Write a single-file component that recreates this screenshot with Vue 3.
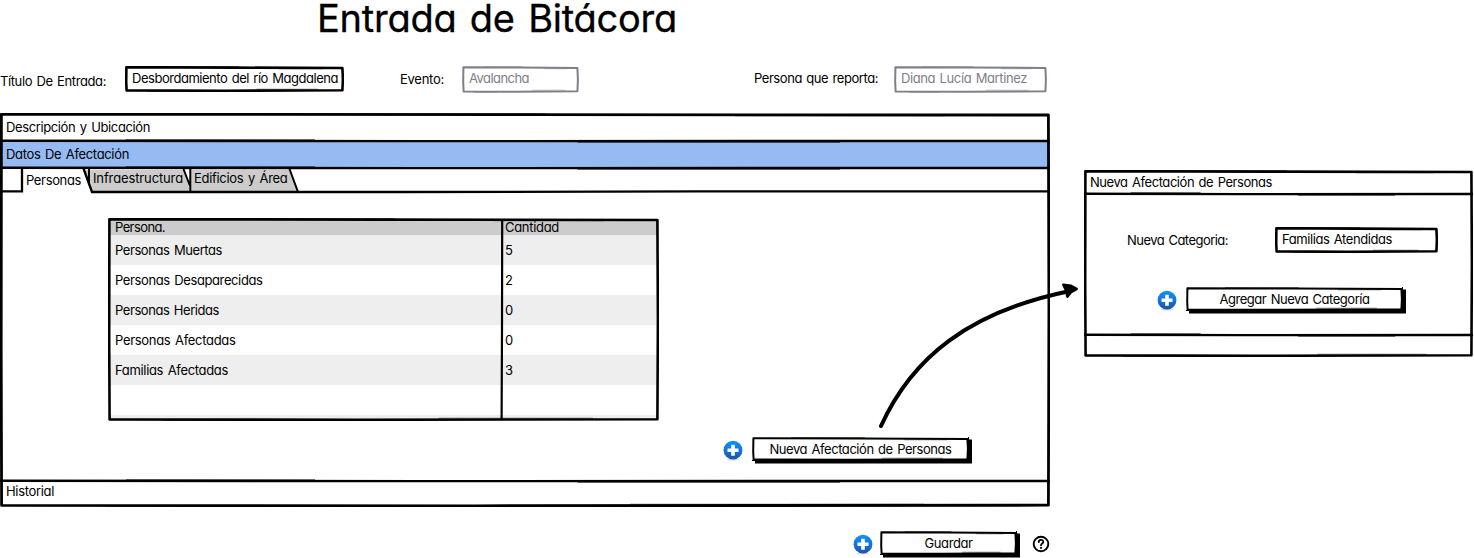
<script setup>
import { h } from 'vue'

// Spreads a label's letters so that it fills a given width.
const vFit = {
  mounted(el, { value }) {
    const n = el.textContent.length
    const w = el.getBoundingClientRect().width
    el.style.letterSpacing = (value - w) / n + 'px'
  },
}

// Hand-drawn rectangle that covers its parent.
const Sketch = ({ w, h: t, c = '#000', s = 2.4 }) =>
  h('svg', { class: 'sketch', width: w, height: t, viewBox: `0 0 ${w} ${t}`, fill: 'none', stroke: c, 'aria-hidden': 'true' }, [
    h('path', { 'stroke-width': s, 'stroke-linejoin': 'round', d: `M1.4 1.2 L${w * 0.5} 1.6 L${w - 1.6} 2 L${w - 1.1} ${t * 0.5} L${w - 1.6} ${t - 1.8} L${w * 0.45} ${t - 1.2} L1.6 ${t - 1.6} L1.2 ${t * 0.6} Z` }),
    h('path', { 'stroke-width': 1, opacity: 0.45, d: `M${w * 0.18} .5 H${w * 0.52} M${w * 0.7} 2.8 H${w * 0.9} M${w * 0.1} ${t - 0.5} H${w * 0.3} M${w * 0.6} ${t - 2.8} H${w * 0.88}` }),
  ])
Sketch.props = ['w', 'h', 'c', 's']

const Rule = ({ w }) =>
  h('svg', { class: 'rule', width: w, height: 4, viewBox: `0 0 ${w} 4`, fill: 'none', stroke: '#000' }, [
    h('path', { 'stroke-width': 2.4, d: `M0 1.8 L${w * 0.4} 2.1 L${w} 2` }),
    h('path', { 'stroke-width': 1, opacity: 0.5, d: `M${w * 0.12} .5 H${w * 0.3} M${w * 0.55} 3.5 H${w * 0.8}` }),
  ])
Rule.props = ['w']

const Plus = () =>
  h('svg', { class: 'plus', width: 20, height: 22, viewBox: '0 0 20 22' }, [
    h('defs', [
      h('linearGradient', { id: 'blue', x1: 0, y1: 0, x2: 0, y2: 1 }, [
        h('stop', { offset: '0', 'stop-color': '#1192fb' }),
        h('stop', { offset: '.5', 'stop-color': '#1673dc' }),
        h('stop', { offset: '1', 'stop-color': '#1c50ad' }),
      ]),
    ]),
    h('ellipse', { cx: 10, cy: 19.5, rx: 6, ry: 1, fill: '#000', opacity: 0.15 }),
    h('circle', { cx: 10, cy: 10.2, r: 9.4, fill: 'url(#blue)' }),
    h('path', { d: 'M8.2 4.8h3.6v3.7h3.7v3.6h-3.7v3.7H8.2v-3.7H4.5V8.5h3.7z', fill: '#fff' }),
  ])

const rows = [
  { name: 'Personas Muertas', width: 107, count: 5 },
  { name: 'Personas Desaparecidas', width: 147.5, count: 2 },
  { name: 'Personas Heridas', width: 104, count: 0 },
  { name: 'Personas Afectadas', width: 120.5, count: 0 },
  { name: 'Familias Afectadas', width: 113, count: 3 },
]
</script>

<template>
  <main class="page">
    <h1><span v-fit="360">Entrada de Bitácora</span></h1>

    <div class="columns">
      <section class="entry">
        <div class="form">
          <label class="l1"><span v-fit="106">Título De Entrada:</span></label>
          <div class="field f1"><Sketch :w="219" :h="26" :s="2.6" /><span v-fit="206">Desbordamiento del río Magdalena</span></div>
          <label class="l2"><span v-fit="44">Evento:</span></label>
          <div class="field f2 off"><Sketch :w="117" :h="27" c="#7f7e8a" :s="2" /><span v-fit="60">Avalancha</span></div>
          <label class="l3"><span v-fit="124">Persona que reporta:</span></label>
          <div class="field f3 off"><Sketch :w="153" :h="27" c="#7f7e8a" :s="2" /><span v-fit="126">Diana Lucía Martinez</span></div>
        </div>

        <div class="accordion">
          <Sketch :w="1050" :h="394" :s="2.8" />
          <div class="bar first"><span v-fit="144">Descripción y Ubicación</span><Rule :w="1050" /></div>
          <div class="bar active"><span v-fit="123">Datos De Afectación</span><Rule :w="1050" /></div>
          <div class="tabs">
            <svg class="tabart" width="1050" height="28" viewBox="0 0 1050 28" fill="none" stroke="#000" stroke-width="2.3">
              <path d="M84 3H184L190 24H92z M190 3H290L298 24H190z" fill="#ccc" stroke="none" />
              <path d="M22 2V24.4H2" />
              <path d="M83.5 1.5L92 25H400L700 24.4H1048" />
              <path d="M89 2V18 M183.5 2L190 19 M190.3 2V25 M289.5 2L298 25" stroke-width="2" />
            </svg>
            <span v-fit="55" class="tab t1">Personas</span>
            <span v-fit="90" class="tab t2">Infraestructura</span>
            <span v-fit="93.5" class="tab t3">Edificios y Área</span>
          </div>
          <div class="body">
            <div class="table">
              <Sketch :w="551" :h="203" :s="2.6" />
              <div class="tr head"><span v-fit="50">Persona.</span><span v-fit="54">Cantidad</span></div>
              <div v-for="r in rows" :key="r.name" class="tr">
                <span v-fit="r.width">{{ r.name }}</span><span>{{ r.count }}</span>
              </div>
              <div class="tr"></div>
              <div class="tr last"></div>
              <svg class="divider" width="4" height="201" viewBox="0 0 4 201"><path d="M2.2 0L2 110L1.6 201" stroke="#000" stroke-width="2.2" fill="none" /></svg>
            </div>
            <div class="action new">
              <Plus />
              <button class="b218"><Sketch :w="217" :h="24" :s="2" /><span v-fit="182">Nueva Afectación de Personas</span></button>
            </div>
          </div>
          <div class="bar history"><Rule :w="1050" /><span v-fit="48">Historial</span></div>
        </div>

        <div class="action save">
          <Plus />
          <button class="b137"><Sketch :w="137" :h="24" :s="2" /><span v-fit="48">Guardar</span></button>
          <svg class="help" width="18" height="18" viewBox="0 0 18 18" fill="none" stroke="#000" stroke-linecap="round">
            <circle cx="9" cy="9" r="7.3" stroke-width="1.9" />
            <path d="M6.7 7.1C6.8 4.1 11.4 4.2 11.3 6.9C11.2 8.6 9 8.3 9 10.2" stroke-width="1.8" />
            <path d="M9 12.7v.2" stroke-width="2" />
          </svg>
        </div>
      </section>

      <aside class="dialog">
        <Sketch :w="389" :h="187" :s="2.6" />
        <div class="dtitle"><span v-fit="182">Nueva Afectación de Personas</span><Rule :w="389" /></div>
        <div class="dbody">
          <div class="drow">
            <label><span v-fit="101">Nueva Categoria:</span></label>
            <div class="field f4"><Sketch :w="163" :h="26" :s="2.6" /><span v-fit="110">Familias Atendidas</span></div>
          </div>
          <div class="action add">
            <Plus />
            <button class="b218"><Sketch :w="217" :h="24" :s="2" /><span v-fit="150">Agregar Nueva Categoría</span></button>
          </div>
        </div>
        <Rule :w="389" />
      </aside>
    </div>

    <svg class="arrow" width="220" height="160" viewBox="870 275 220 160" fill="none" stroke="#000" stroke-linecap="round" stroke-linejoin="round">
      <path d="M881 426C912 358 968 312 1070 291" stroke-width="4" />
      <path d="M1063.5 284.8L1071 286L1076.5 289L1071 292L1067.5 296.5L1066 290z" fill="#000" stroke-width="2.8" />
    </svg>
  </main>
</template>

<style>
html,
body {
  background: #fff;
}
.sketch {
  position: absolute;
  left: 0;
  top: 0;
  z-index: 2;
  pointer-events: none;
}
.rule {
  display: block;
}
.plus {
  display: block;
  flex: none;
}
</style>

<style scoped>
.page {
  position: relative;
  width: 1474px;
  height: 558px;
  box-sizing: border-box;
  color: #000;
  font: 13px/16px Inter, 'Open Sans', sans-serif;
  font-feature-settings: 'cv11', 'ss03', 'calt' 0;
  word-spacing: 1.2px;
}
span {
  display: inline-block;
  white-space: nowrap;
}
h1 {
  margin: 0;
  height: 66px;
  padding-left: 317px;
  font-size: 38px;
  line-height: 37px;
  font-weight: 400;
  word-spacing: 3px;
  -webkit-text-stroke: 0.3px #000;
  box-sizing: border-box;
}
.columns {
  display: flex;
  gap: 34px;
}
.entry {
  width: 1050px;
}
.form {
  display: flex;
  height: 47px;
  align-items: flex-start;
}
.form label {
  flex: none;
  box-sizing: border-box;
}
.l1 {
  width: 125px;
  padding-top: 7px;
}
.l2 {
  width: 118px;
  padding: 5px 0 0 56px;
}
.l3 {
  width: 315px;
  padding: 4px 0 0 175px;
}
.field {
  position: relative;
  flex: none;
  box-sizing: border-box;
  height: 26px;
  padding: 4px 0 0 7px;
}
.field.off {
  color: #7f7e8a;
}
.f1 {
  width: 219px;
}
.f2 {
  width: 117px;
}
.f3 {
  width: 153px;
}
.f4 {
  width: 163px;
}
.accordion {
  position: relative;
  height: 394px;
}
.bar {
  display: flex;
  flex-direction: column;
  align-items: flex-start;
  justify-content: space-between;
  box-sizing: border-box;
  height: 27px;
}
.bar > span {
  margin: 4px 0 0 6px;
}
.first {
  height: 29px;
}
.first > span {
  margin-top: 6px;
}
.first .rule,
.active .rule {
  margin-bottom: -1px;
}
.active {
  background: #95bbf2;
}
.tabs {
  position: relative;
  display: flex;
  align-items: flex-start;
  height: 24px;
  margin-top: -2px;
  z-index: 1;
}
.tabart {
  position: absolute;
  left: 0;
  top: 0;
}
.tab {
  position: relative;
  flex: none;
}
.t1 {
  margin: 5px 0 0 26px;
}
.t2 {
  margin: 3px 0 0 12px;
}
.t3 {
  margin: 3px 0 0 11px;
}
.body {
  height: 288px;
  padding: 27px 0 0 108px;
  box-sizing: border-box;
}
.table {
  position: relative;
  width: 551px;
  height: 203px;
  box-sizing: border-box;
  padding: 1px 2px 0;
}
.tr {
  display: grid;
  grid-template-columns: 390px 1fr;
  justify-items: start;
  height: 30px;
  padding: 7px 0 0 5px;
  box-sizing: border-box;
}
.tr:nth-of-type(even) {
  background: #eee;
}
.tr.head {
  height: 16px;
  padding-top: 0;
  background: #ccc;
}
.tr.last {
  height: 5px;
  padding: 0;
}
.divider {
  position: absolute;
  left: 392px;
  top: 1px;
}
.action {
  display: flex;
  align-items: flex-start;
}
.action button {
  position: relative;
  border: 0;
  padding: 0;
  font: inherit;
  font-feature-settings: inherit;
  word-spacing: inherit;
  color: inherit;
  height: 24px;
  background: #fff;
  box-shadow: 3px 2.5px 0 #000, inset -1px -1px 0 #000;
  text-align: center;
}
.b218 {
  width: 217px;
}
.b137 {
  width: 137px;
}
.new {
  margin: 16px 0 0 615px;
}
.new .plus,
.save .plus,
.add .plus {
  margin-top: 3px;
}
.new button,
.add button {
  margin-left: 9px;
}
.history {
  justify-content: flex-start;
}
.history > span {
  margin-top: 0;
}
.save {
  margin: 24px 0 0 853px;
}
.save button {
  margin-left: 7px;
}
.save .help {
  margin: 4px 0 0 15px;
}
.dialog {
  position: relative;
  width: 389px;
  height: 187px;
  margin-top: 104px;
}
.dtitle {
  height: 26px;
  display: flex;
  flex-direction: column;
  justify-content: space-between;
  align-items: flex-start;
}
.dtitle span {
  margin: 4px 0 0 6px;
}
.dbody {
  height: 137px;
  padding: 31px 0 0 43px;
  box-sizing: border-box;
}
.drow {
  display: flex;
}
.drow label {
  width: 148px;
  padding-top: 5px;
}
.add {
  margin: 34px 0 0 30px;
}
.arrow {
  position: absolute;
  left: 870px;
  top: 275px;
  z-index: 3;
}
</style>
